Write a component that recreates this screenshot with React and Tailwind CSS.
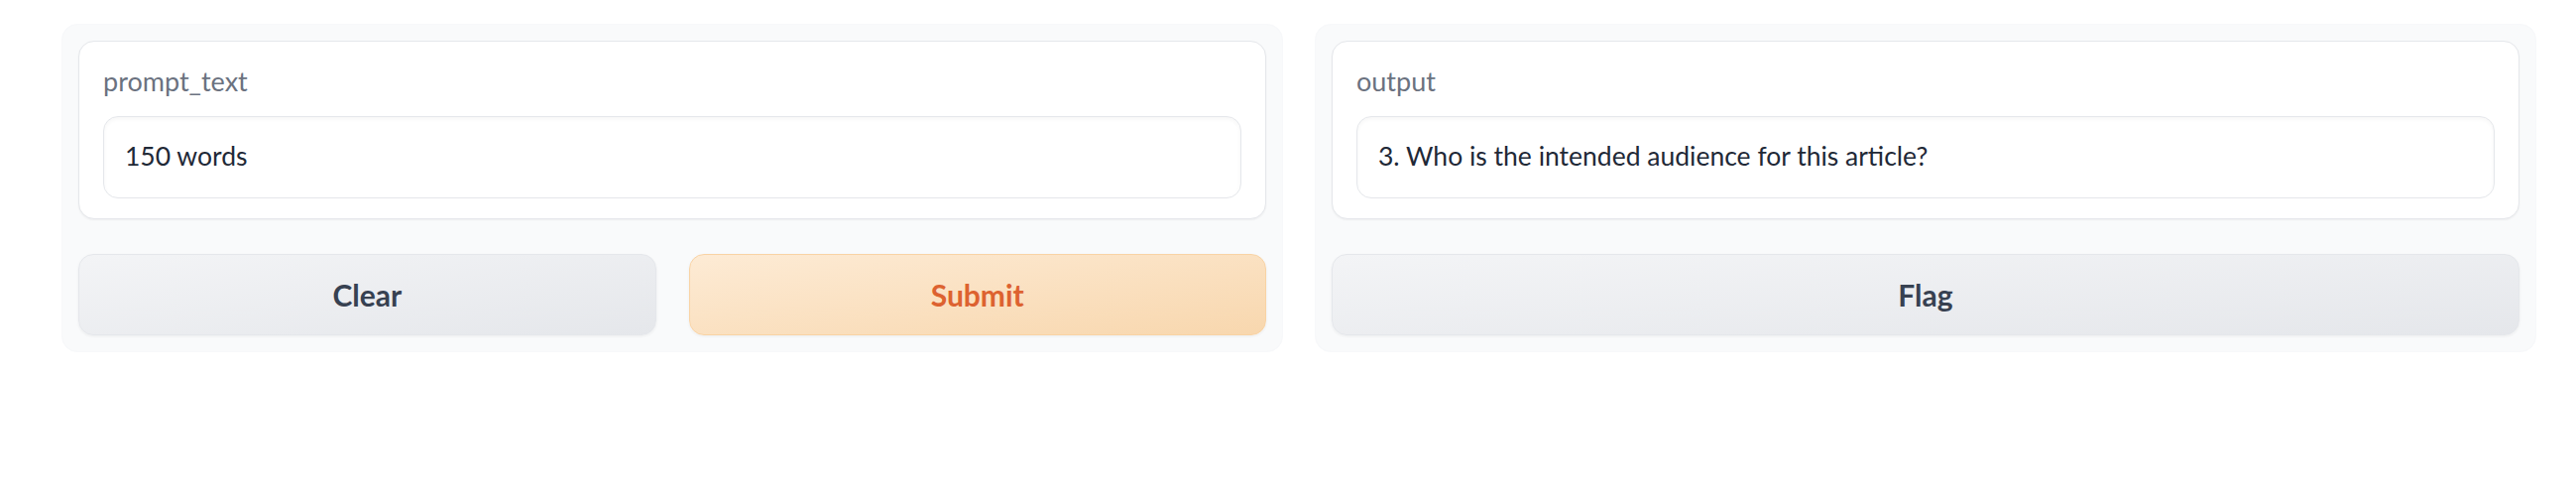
const font = { fontFamily: "Lato, 'Noto Sans', sans-serif" };

function TextBlock({ label, value }) {
  return (
    <div className="rounded-[16px] border border-[#e5e7eb] bg-white px-[24px] py-[20px] shadow-[0_1px_2px_rgba(0,0,0,0.05)]">
      <p className="text-[27px] leading-[39px] text-[#6b7280]">{label}</p>
      <div className="mt-[16px] flex h-[83px] items-center rounded-[15px] border border-[#e5e7eb] bg-white px-[21px] pb-[2px] text-[26.5px] text-[#1f2937] shadow-[inset_0_2px_4px_rgba(0,0,0,0.04)]">
        {value}
      </div>
    </div>
  );
}

function Button({ children, primary }) {
  return (
    <button
      type="button"
      className={`flex h-[82px] w-full items-center justify-center rounded-[15px] border text-[30px] font-bold shadow-[0_1px_3px_rgba(0,0,0,0.06)] ${
        primary
          ? "border-[#f9d3a4] bg-[linear-gradient(to_bottom_right,#fdebd5,#f8d7ae)] text-[#dd6230]"
          : "border-[#e5e7eb] bg-[linear-gradient(to_bottom_right,#f3f4f6,#e5e7eb)] text-[#374151]"
      }`}
    >
      {children}
    </button>
  );
}

export default function App() {
  return (
    <div className="h-[504px] w-full bg-white pl-[62px] pr-[40px] pt-[24px]" style={font}>
      <div className="flex gap-[32px]">
        <section className="flex-1 rounded-[16px] border border-[#f7f8fa] bg-[#f9fafb] p-[16px]">
          <TextBlock label="prompt_text" value="150 words" />
          <div className="mt-[35px] grid grid-cols-2 gap-[33px]">
            <Button>Clear</Button>
            <Button primary>Submit</Button>
          </div>
        </section>

        <section className="flex-1 rounded-[16px] border border-[#f7f8fa] bg-[#f9fafb] p-[16px]">
          <TextBlock label="output" value="3. Who is the intended audience for this article?" />
          <div className="mt-[35px]">
            <Button>Flag</Button>
          </div>
        </section>
      </div>
    </div>
  );
}
